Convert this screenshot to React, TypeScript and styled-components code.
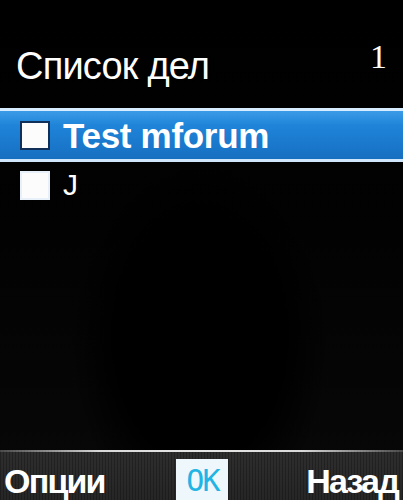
import React from "react";
import styled, { createGlobalStyle } from "styled-components";

const Global = createGlobalStyle`
  html, body {
    margin: 0;
    padding: 0;
    background: #000;
  }
  #root {
    width: 403px;
    height: 500px;
  }
`;

const Screen = styled.div`
  width: 403px;
  height: 500px;
  display: flex;
  flex-direction: column;
  overflow: hidden;
  background:
    radial-gradient(ellipse 130px 190px at 200px 340px, #000 65%, rgba(0, 0, 0, 0) 100%),
    linear-gradient(180deg, #000 0%, #020202 45%, #080808 100%);
  font-family: "Liberation Sans", Arial, sans-serif;
  color: #fff;
`;

const Header = styled.div`
  height: 108px;
  display: flex;
  align-items: flex-start;
  justify-content: space-between;
  padding: 45px 16px 0 16px;
  box-sizing: border-box;
`;

const Titulo = styled.div`
  font-size: 38px;
  letter-spacing: -0.8px;
  line-height: 42px;
`;

const Contador = styled.div`
  font-family: "Liberation Serif", "Times New Roman", serif;
  font-size: 34px;
  line-height: 34px;
  margin-top: -5px;
`;

const Lista = styled.div`
  display: flex;
  flex-direction: column;
`;

const Linha = styled.div<{ $ativo?: boolean }>`
  height: ${({ $ativo }) => ($ativo ? "48px" : "46px")};
  display: flex;
  align-items: center;
  gap: 13px;
  padding-left: 20px;
  ${({ $ativo }) =>
    $ativo
      ? `
    border-top: 3px solid #d8ecff;
    border-bottom: 3px solid #cfe6fb;
    background: linear-gradient(180deg, #3a9be8 0%, #1f84d8 30%, #1a78cc 70%, #176fc0 100%);
  `
      : ""}
`;

const Caixa = styled.div<{ $ativo?: boolean }>`
  width: 30px;
  height: 29px;
  background: #fcfcfc;
  border: 2px solid ${({ $ativo }) => ($ativo ? "#10305a" : "#e8f0fa")};
  box-sizing: border-box;
`;

const Texto = styled.div<{ $ativo?: boolean }>`
  font-weight: ${({ $ativo }) => ($ativo ? 700 : 400)};
  font-size: ${({ $ativo }) => ($ativo ? "35px" : "30px")};
  letter-spacing: ${({ $ativo }) => ($ativo ? "-0.3px" : "0")};
  line-height: 1;
`;

const Espaco = styled.div`
  flex: 1;
`;

const BarraSoft = styled.div`
  height: 50px;
  position: relative;
  display: flex;
  align-items: center;
  justify-content: space-between;
  padding: 0 5px 0 4px;
  background:
    repeating-linear-gradient(90deg, rgba(0, 0, 0, 0.25) 0 1px, transparent 1px 3px),
    linear-gradient(180deg, #2e2e2e 0%, #262626 100%);
  &::before {
    content: "";
    position: absolute;
    left: 0;
    right: 0;
    top: 0;
    height: 2px;
    background: linear-gradient(90deg, rgba(200, 200, 200, 0.2) 0%, #d8d8d8 25%, #e6e6e6 50%, #d8d8d8 75%, rgba(200, 200, 200, 0.2) 100%);
  }
`;

const Soft = styled.div`
  font-weight: 700;
  font-size: 34px;
  letter-spacing: -1.8px;
  margin-top: 12px;
`;

const BotaoOk = styled.div`
  align-self: flex-end;
  width: 52px;
  height: 43px;
  margin-right: 6px;
  background: #eef7fb;
  color: #22b4e4;
  font-family: "DejaVu Sans Mono", monospace;
  font-size: 30px;
  display: flex;
  align-items: center;
  justify-content: center;
  margin-bottom: -2px;
  letter-spacing: -2px;
`;

const tarefas = [
  { nome: "Test mforum", ativo: true },
  { nome: "J", ativo: false },
];

export default function App() {
  return (
    <>
      <Global />
      <Screen>
        <Header>
          <Titulo>Список дел</Titulo>
          <Contador>1</Contador>
        </Header>
        <Lista>
          {tarefas.map((t, i) => (
            <Linha key={i} $ativo={t.ativo}>
              <Caixa $ativo={t.ativo} />
              <Texto $ativo={t.ativo}>{t.nome}</Texto>
            </Linha>
          ))}
        </Lista>
        <Espaco />
        <BarraSoft>
          <Soft>Опции</Soft>
          <BotaoOk>OK</BotaoOk>
          <Soft>Назад</Soft>
        </BarraSoft>
      </Screen>
    </>
  );
}
